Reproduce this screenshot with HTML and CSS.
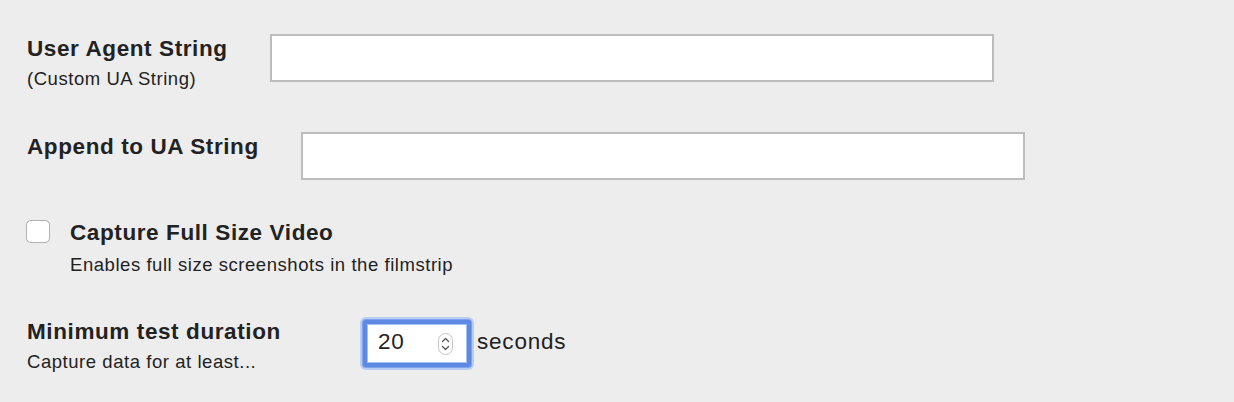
FILE: index.html
```html
<!DOCTYPE html>
<html lang="en">
<head>
<meta charset="utf-8">
<title>Advanced settings</title>
<link rel="stylesheet" href="styles.css">
</head>
<body>
<div class="form">
  <div class="field field-ua">
    <div class="label">
      <div class="title">User Agent String</div>
      <div class="hint">(Custom UA String)</div>
    </div>
    <input class="text-input" type="text">
  </div>

  <div class="field field-append">
    <div class="label">
      <div class="title">Append to UA String</div>
    </div>
    <input class="text-input" type="text">
  </div>

  <div class="field field-check">
    <input class="checkbox" type="checkbox">
    <div class="label">
      <div class="title">Capture Full Size Video</div>
      <div class="hint hint-check">Enables full size screenshots in the filmstrip</div>
    </div>
  </div>

  <div class="field field-duration">
    <div class="label label-fixed">
      <div class="title">Minimum test duration</div>
      <div class="hint">Capture data for at least...</div>
    </div>
    <div class="number-box">
      <span class="number-value">20</span>
      <svg class="spinner" width="15" height="22" viewBox="0 0 15 22">
        <rect x="0.5" y="0.5" width="14" height="21" rx="7" fill="#fff" stroke="#c4c4c4"/>
        <path d="M4.5 8.5 L7.5 5.5 L10.5 8.5" fill="none" stroke="#555" stroke-width="1.3" stroke-linecap="round" stroke-linejoin="round"/>
        <path d="M4.5 13.5 L7.5 16.5 L10.5 13.5" fill="none" stroke="#555" stroke-width="1.3" stroke-linecap="round" stroke-linejoin="round"/>
      </svg>
    </div>
    <span class="unit">seconds</span>
  </div>
</div>
</body>
</html>
```

FILE: styles.css
```css
html, body {
  margin: 0;
  padding: 0;
}

body {
  background: #ededed;
  color: #222;
  font-family: "Liberation Sans", Arial, Helvetica, sans-serif;
  width: 1234px;
  height: 402px;
  overflow: hidden;
}

.form {
  display: flex;
  flex-direction: column;
  padding: 34px 0 0 27px;
}

.field {
  display: flex;
  align-items: flex-start;
}

.title {
  font-size: 22.5px;
  line-height: 26px;
  font-weight: bold;
  letter-spacing: 0.6px;
  white-space: nowrap;
}

.hint {
  font-size: 18.5px;
  line-height: 22px;
  letter-spacing: 0.55px;
  margin-top: 6px;
  white-space: nowrap;
}

.field-ua,
.field-append {
  gap: 42px;
}

.field-ua .label,
.field-append .label {
  margin-top: 2px;
}

.field-ua {
  margin-bottom: 42px;
}

.field-append {
  margin-bottom: 40px;
}

.text-input {
  box-sizing: border-box;
  width: 724px;
  height: 48px;
  margin: 0;
  border: 2px solid #bdbdbd;
  border-radius: 0;
  background: #fff;
  outline: none;
}

.field-check {
  margin-bottom: 43px;
}

.checkbox {
  appearance: none;
  -webkit-appearance: none;
  box-sizing: border-box;
  width: 24px;
  height: 23px;
  margin: 0 20px 0 -1px;
  border: 1px solid #b4b4b4;
  border-radius: 5px;
  background: #fff;
  box-shadow: 0 0 1px rgba(0, 0, 0, 0.15);
}

.hint-check {
  margin-top: 8px;
}

.label-fixed {
  flex: 0 0 336px;
}

.number-box {
  box-sizing: border-box;
  width: 108px;
  height: 47px;
  margin-top: 1px;
  display: flex;
  align-items: center;
  padding: 0 14px 0 11px;
  background: #fff;
  border: 4px solid #5d89e3;
  border-radius: 3px;
  box-shadow: 0 0 0 1px #7ea3eb, 0 0 0 3px #b8cdf3, inset 0 0 0 1px #a4bff2;
}

.number-value {
  font-size: 22.5px;
  line-height: 26px;
  letter-spacing: 0.8px;
  margin-bottom: 4px;
}

.spinner {
  display: block;
  margin-left: auto;
}

.unit {
  font-size: 22.5px;
  line-height: 47px;
  letter-spacing: 0.8px;
  margin-top: -1px;
  margin-left: 6px;
}
```
